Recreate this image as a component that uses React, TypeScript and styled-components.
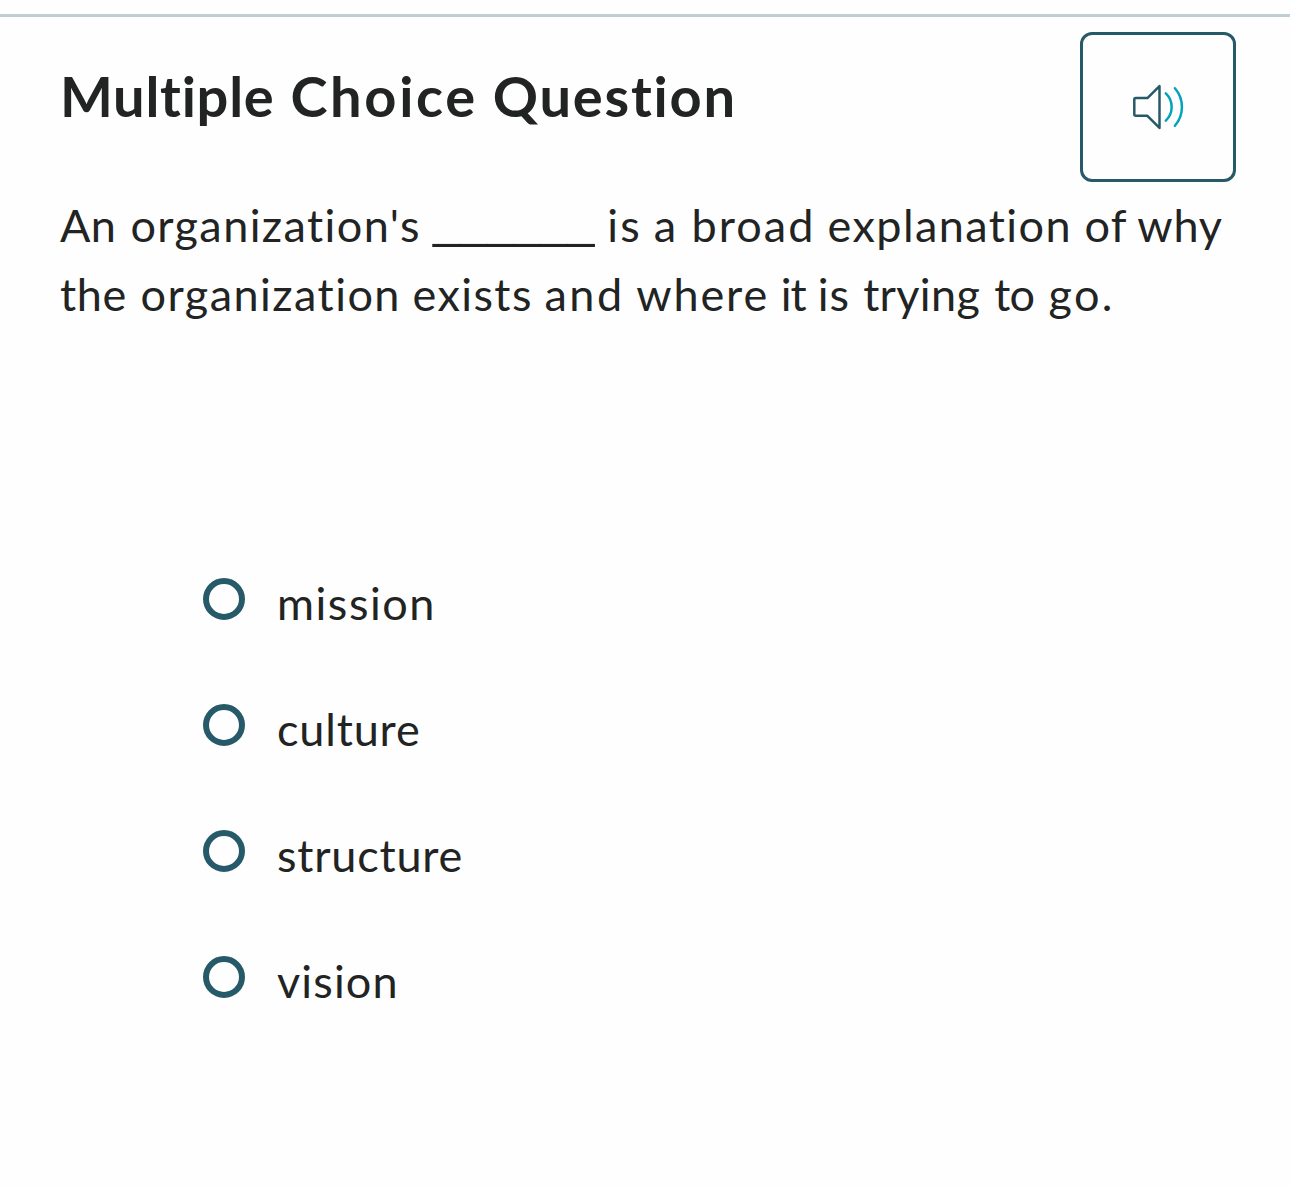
import React, { useState } from "react";
import styled, { createGlobalStyle } from "styled-components";

const color = {
  ink: "#222323",
  teal: "#265a69",
  wave: "#00a3ba",
  rule: "#c1cdd4",
};

const GlobalStyle = createGlobalStyle`
  * { box-sizing: border-box; }
  body {
    margin: 0;
    background: #fefefe;
    color: ${color.ink};
    font-family: Lato, "Open Sans", sans-serif;
    font-variant-ligatures: none;
  }
`;

const Page = styled.main`
  display: flex;
  flex-direction: column;
  min-height: 1187px;
  padding-top: 14px;
`;

const Divider = styled.hr`
  width: 100%;
  height: 3px;
  margin: 0;
  border: 0;
  background: ${color.rule};
`;

const Header = styled.header`
  display: flex;
  align-items: flex-start;
  justify-content: space-between;
  padding: 15px 54px 0 60px;
`;

const Title = styled.h1`
  display: flex;
  margin: 30px 0 0;
  font-size: 56px;
  font-weight: 700;
  line-height: 68px;
`;

const Word = styled.span<{ $slot: number; $tracking: number }>`
  flex: none;
  width: ${(p) => p.$slot}px;
  letter-spacing: ${(p) => p.$tracking}px;
  white-space: pre;
`;

const AudioButton = styled.button`
  display: flex;
  align-items: center;
  justify-content: center;
  width: 156px;
  height: 150px;
  padding: 0;
  border: 3px solid ${color.teal};
  border-radius: 12px;
  background: transparent;
`;

const Prompt = styled.p`
  margin: 9px 0 0;
  padding-left: 60px;
  font-size: 45px;
  line-height: 69px;
`;

const Line = styled.span`
  display: flex;
  height: 69px;
`;

const Blank = styled.span`
  flex: none;
  width: 174.2px;
  font-family: "Liberation Sans", Arial, sans-serif;
  font-size: 48.4px;
  line-height: 59px;
  white-space: pre;
`;

const Options = styled.div`
  display: flex;
  flex-direction: column;
  gap: 56px;
  margin: 239px 0 0;
  padding-left: 203px;
`;

const Option = styled.label`
  display: flex;
  align-items: flex-start;
  gap: 32px;
`;

const Radio = styled.input`
  appearance: none;
  flex: none;
  width: 42px;
  height: 42px;
  margin: 10px 0 0;
  border: 6px solid ${color.teal};
  border-radius: 50%;
  background: transparent;

  &:checked {
    background: radial-gradient(${color.teal} 0 8px, transparent 9px);
  }
`;

const OptionText = styled.span<{ $tracking: number }>`
  padding-top: 1px;
  font-size: 45px;
  line-height: 69px;
  letter-spacing: ${(p) => p.$tracking}px;
`;

type Token = [text: string, slot: number, tracking: number];

const title: Token[] = [
  ["Multiple", 230.4, 0.73],
  ["Choice", 202.4, 2.67],
  ["Question", 245, 1.78],
];

const firstLine: { before: Token[]; after: Token[] } = {
  before: [
    ["An", 70.4, 0.42],
    ["organization's", 302.6, 1.4],
  ],
  after: [
    ["is", 46.7, 2.23],
    ["a", 37.6, 1.5],
    ["broad", 136.1, 2.04],
    ["explanation", 257, 1.42],
    ["of", 52.7, 1.22],
    ["why", 86, 0.8],
  ],
};

const secondLine: Token[] = [
  ["the", 80.5, 0.58],
  ["organization", 272, 1.45],
  ["exists", 132, 1.42],
  ["and", 91.7, 2.5],
  ["where", 144.6, 1.88],
  ["it", 37, -1.2],
  ["is", 45.4, 1.03],
  ["trying", 131, 0.32],
  ["to", 54.3, -0.8],
  ["go.", 68, 2.4],
];

const options = [
  { label: "mission", tracking: 1.53 },
  { label: "culture", tracking: 0.84 },
  { label: "structure", tracking: 0.79 },
  { label: "vision", tracking: 1.13 },
];

function Words({ tokens }: { tokens: Token[] }) {
  return (
    <>
      {tokens.map(([text, slot, tracking], i) => (
        <Word key={i} $slot={slot} $tracking={tracking}>
          {text + " "}
        </Word>
      ))}
    </>
  );
}

function SpeakerIcon() {
  return (
    <svg width="54" height="50" viewBox="0 0 54 50" fill="none" strokeLinecap="round" strokeLinejoin="round">
      <path
        d="M28.5 4.2V45.9L16.4 33.8H4.8Q3.3 33.8 3.3 32.3V17.6Q3.3 16.1 4.8 16.1H16.4Z"
        stroke={color.teal}
        strokeWidth="2.5"
      />
      <path d="M34.8 11.4A18.7 18.7 0 0 1 34.8 38.6" stroke={color.wave} strokeWidth="2.5" />
      <path d="M43.9 6.3A28.5 28.5 0 0 1 43.9 43.8" stroke={color.wave} strokeWidth="2.5" />
    </svg>
  );
}

export default function App() {
  const [choice, setChoice] = useState("");
  return (
    <>
      <GlobalStyle />
      <Page>
        <Divider />
        <Header>
          <Title>
            <Words tokens={title} />
          </Title>
          <AudioButton type="button" aria-label="Read aloud">
            <SpeakerIcon />
          </AudioButton>
        </Header>
        <Prompt>
          <Line>
            <Words tokens={firstLine.before} />
            <Blank>{"______ "}</Blank>
            <Words tokens={firstLine.after} />
          </Line>
          <Line>
            <Words tokens={secondLine} />
          </Line>
        </Prompt>
        <Options role="radiogroup">
          {options.map((o) => (
            <Option key={o.label}>
              <Radio
                type="radio"
                name="answer"
                checked={choice === o.label}
                onChange={() => setChoice(o.label)}
              />
              <OptionText $tracking={o.tracking}>{o.label}</OptionText>
            </Option>
          ))}
        </Options>
      </Page>
    </>
  );
}
